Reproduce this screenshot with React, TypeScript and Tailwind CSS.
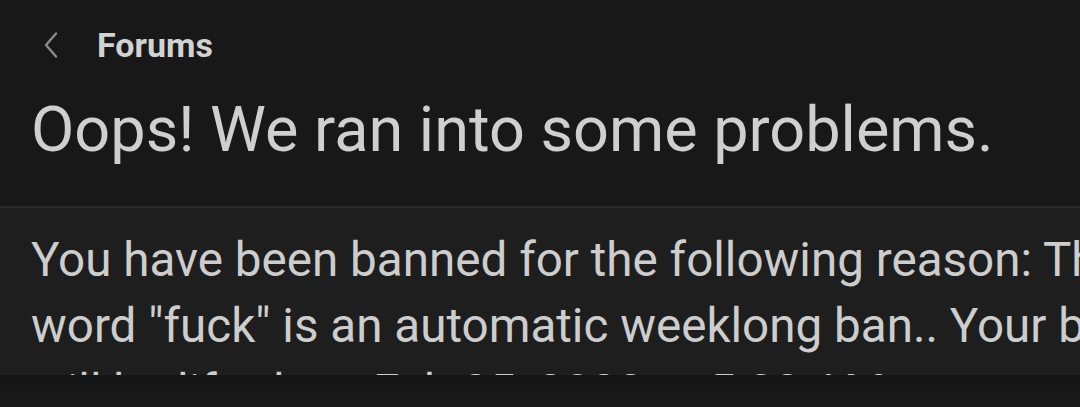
import React from "react";

export default function App() {
  return (
    <div className="w-[1080px] h-[407px] overflow-hidden bg-[#181818] flex flex-col" style={{ fontFamily: "Roboto, 'Noto Sans', sans-serif" }}>
      <div className="h-[90px] flex items-center pl-[40px] shrink-0">
        <svg width="22" height="30" viewBox="0 0 22 30" className="mr-[35px]">
          <path d="M16 3.5 L6 15 L16 26.5" fill="none" stroke="#8c8c8c" strokeWidth="2.4" strokeLinecap="round" strokeLinejoin="round" />
        </svg>
        <span className="text-[34px] leading-[40px] font-bold text-[#d2d2d2]">Forums</span>
      </div>
      <div className="pl-[31px] h-[116px] shrink-0">
        <h1 className="text-[63px] leading-[80px] text-[#cfcfcf] font-normal whitespace-nowrap">Oops! We ran into some problems.</h1>
      </div>
      <div className="h-[2px] bg-[#2a2a2a] shrink-0" />
      <div className="h-[167px] bg-[#1e1e1e] overflow-hidden pl-[31px] pt-[19px] shrink-0">
        <p className="text-[47.6px] leading-[66px] text-[#cdcdcd] whitespace-nowrap">
          <span className="block">You have been banned for the following reason: The</span>
          <span className="block">word "fuck" is an automatic weeklong ban.. Your ban</span>
          <span className="block">will be lifted on: Feb 25, 2023 at 5:03 AM.</span>
        </p>
      </div>
      <div className="flex-1 bg-gradient-to-b from-[#151515] to-[#1a1a1a]" />
    </div>
  );
}
